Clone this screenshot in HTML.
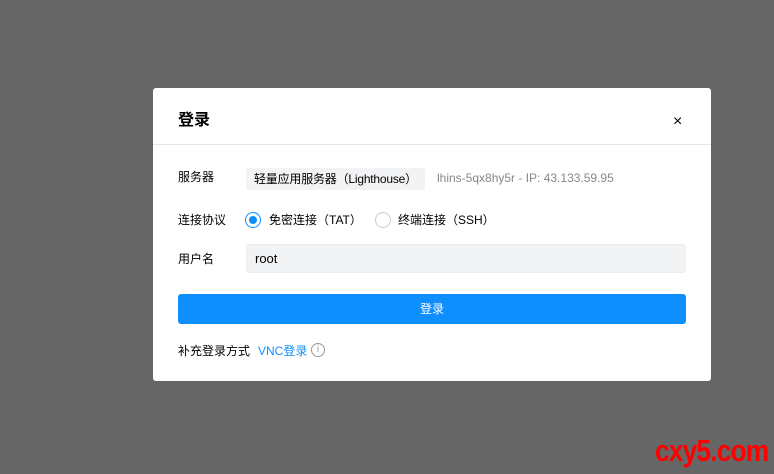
<!DOCTYPE html>
<html><head><meta charset="utf-8"><style>
*{margin:0;padding:0;box-sizing:border-box}
body{width:774px;height:474px;background:#666;position:relative;overflow:hidden;font-family:"Liberation Sans","Noto Sans CJK SC",sans-serif;font-size:12px;color:#000}
.dlg{position:absolute;left:153px;top:88px;width:558px;height:293px;background:#fff;border-radius:3px}
.hd{height:57px;border-bottom:1px solid #e5e5e5;position:relative}
.title{position:absolute;left:25px;top:18px;font-size:16px;font-weight:bold;color:#000}
.x{position:absolute;left:520px;top:25px;font-size:16px;color:#000}
.a{position:absolute;font-size:12px;white-space:nowrap}
.lbl{left:25px;color:#000}
.tag{position:absolute;left:93px;top:80px;height:22px;background:#f2f3f5;border-radius:2px;line-height:22px;padding:0 8px;color:#000;white-space:nowrap;letter-spacing:-0.2px}
.ip{left:284px;top:83px;color:#888}
.radio{position:absolute;width:16px;height:16px;border-radius:50%;border:1px solid #ccc;background:#fff}
.radio.on{border-color:#0f8ffe}
.radio.on::after{content:"";position:absolute;left:3px;top:3px;width:8px;height:8px;border-radius:50%;background:#0f8ffe}
.inp{position:absolute;left:93px;top:156px;width:440px;height:29px;background:#f2f3f5;border:1px solid #ebedf0;border-radius:3px;line-height:27px;padding-left:8px;font-size:13px}
.btn{position:absolute;left:25px;top:206px;width:508px;height:30px;background:#0f8ffe;border-radius:3px;color:#fff;text-align:center;line-height:30px;font-size:12px}
.wm{position:absolute;left:655px;top:433px;font-family:"Liberation Sans",sans-serif;font-weight:bold;font-size:31px;color:#f00;letter-spacing:-1px;transform:scaleX(0.85);transform-origin:left}
</style></head><body>
<div class="dlg">
<div class="hd"><div class="title">登录</div><div class="x">×</div></div>
<div class="a lbl" style="top:80px">服务器</div>
<div class="tag">轻量应用服务器（Lighthouse）</div>
<div class="a ip">lhins-5qx8hy5r - IP: 43.133.59.95</div>
<div class="a lbl" style="top:123px">连接协议</div>
<div class="radio on" style="left:92px;top:124px"></div>
<div class="a" style="left:116px;top:123px">免密连接（TAT）</div>
<div class="radio" style="left:222px;top:124px"></div>
<div class="a" style="left:245px;top:123px">终端连接（SSH）</div>
<div class="a lbl" style="top:162px">用户名</div>
<div class="inp">root</div>
<div class="btn">登录</div>
<div class="a" style="left:25px;top:254px">补充登录方式</div>
<div class="a" style="left:105px;top:254px;color:#0f8ffe">VNC登录</div>
<div style="position:absolute;left:158px;top:255px;width:14px;height:14px;border:1px solid #999;border-radius:50%;color:#999;font-size:10px;line-height:12px;text-align:center">i</div>
</div>
<div class="wm">cxy5.com</div>
</body></html>
